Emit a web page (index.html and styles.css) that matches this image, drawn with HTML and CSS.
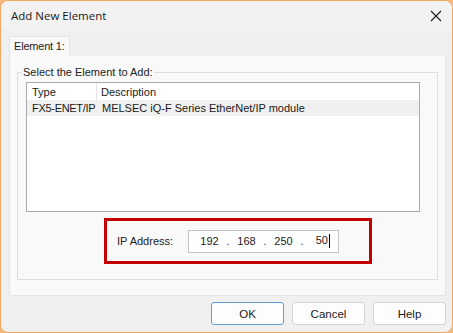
FILE: index.html
```html
<!DOCTYPE html>
<html lang="en">

<head>
    <meta charset="UTF-8">
    <title>Add New Element</title>
    <link rel="stylesheet" href="styles.css">
</head>

<body>
    <div class="window">
        <div class="titlebar">
            <span class="title">Add New Element</span>
            <svg class="close" width="12" height="12" viewBox="0 0 12 12">
                <path d="M1 1 L11 11 M11 1 L1 11" stroke="#1a1a1a" stroke-width="1.1" fill="none" />
            </svg>
        </div>
        <div class="body">
            <div class="tabs">
                <div class="tab">Element 1:</div>
            </div>
            <div class="panel">
                <fieldset class="group">
                    <legend>Select the Element to Add:</legend>
                    <div class="list">
                        <div class="row head">
                            <div class="col-type">Type</div>
                            <div class="col-desc">Description</div>
                        </div>
                        <div class="row item">
                            <div class="col-type">FX5-ENET/IP</div>
                            <div class="col-desc">MELSEC iQ-F Series EtherNet/IP module</div>
                        </div>
                    </div>
                    <div class="ip-area">
                        <span class="ip-label">IP Address:</span>
                        <div class="ip-box">
                            <span class="oct">192</span><span class="dot">.</span>
                            <span class="oct">168</span><span class="dot">.</span>
                            <span class="oct">250</span><span class="dot">.</span>
                            <span class="oct last">50<span class="caret"></span></span>
                        </div>
                    </div>
                </fieldset>
            </div>
            <div class="buttons">
                <button class="btn default">OK</button>
                <button class="btn">Cancel</button>
                <button class="btn">Help</button>
            </div>
        </div>
    </div>
</body>

</html>
```

FILE: styles.css
```css
* {
    margin: 0;
    padding: 0;
    box-sizing: border-box;
}

body {
    width: 453px;
    height: 333px;
    background: #f7b879;
    font-family: "Liberation Sans", Arial, sans-serif;
    font-size: 11px;
    color: #1a1a1a;
}

/* dialog window */
.window {
    width: 453px;
    height: 333px;
    border: 1px solid #f0a860;
    border-radius: 8px;
    background: #f0f0f0;
    overflow: hidden;
}

.titlebar {
    height: 29px;
    display: flex;
    align-items: center;
    justify-content: space-between;
    padding: 0 10px 0 10px;
    background: #f2f2f2;
}

.title {
    font-family: "Open Sans", "Liberation Sans", sans-serif;
    font-size: 11.5px;
    color: #1a1a1a;
}

.body {
    padding: 0 6px 0 8px;
}

/* tab strip */
.tabs {
    display: flex;
    padding-top: 6px;
}

.tab {
    width: 61px;
    height: 20px;
    padding: 3px 0 0 4px;
    background: #f9f9f9;
    border: 1px solid #e4e4e4;
    border-bottom: none;
    color: #222;
    letter-spacing: -0.2px;
}

.panel {
    height: 240px;
    background: #f9f9f9;
    border: 1px solid #e4e4e4;
    border-top: none;
    padding: 10px 7px 0 7px;
}

/* group box */
.group {
    height: 214px;
    border: 1px solid #dedede;
    padding: 4px 17px 0 8px;
}

.group legend {
    margin-left: -4px;
    padding: 0 1px;
    color: #222;
}

.list {
    height: 130px;
    background: #fff;
    border: 1px solid #a9a9b0;
}

.row {
    display: flex;
    height: 17px;
    align-items: center;
    white-space: nowrap;
}

.row.item {
    background: #f0f0f0;
    height: 16px;
}

.col-type {
    width: 70px;
    flex-shrink: 0;
    padding-left: 5px;
}

.item .col-type {
    letter-spacing: -0.3px;
}

.col-desc {
    padding-left: 5px;
}

.head .col-type {
    border-right: 1px solid #e5e5e5;
    height: 100%;
    display: flex;
    align-items: center;
}

.head .col-desc {
    padding-left: 4px;
}

/* highlighted ip area */
.ip-area {
    width: 268px;
    height: 46px;
    margin: 6px 0 0 78px;
    border: 3px solid #c40000;
    display: flex;
    align-items: center;
    padding-left: 10px;
}

.ip-label {
    width: 71px;
    color: #222;
}

.ip-box {
    width: 151px;
    height: 23px;
    background: #fff;
    border: 1px solid #c4c4c4;
    display: flex;
    align-items: center;
    padding-left: 11px;
}

.oct {
    width: 19px;
    text-align: center;
}

.dot {
    width: 18px;
    text-align: center;
}

.oct.last {
    text-align: right;
}

.caret {
    display: inline-block;
    width: 1px;
    height: 14px;
    background: #000;
    vertical-align: middle;
    margin-left: 1px;
}

/* dialog buttons */
.buttons {
    display: flex;
    justify-content: flex-end;
    gap: 8px;
    padding-top: 6px;
}

.btn {
    width: 73px;
    height: 23px;
    background: #fdfdfd;
    border: 1px solid #d4d4d4;
    border-radius: 3px;
    font-family: "Liberation Sans", Arial, sans-serif;
    font-size: 11.5px;
    color: #1a1a1a;
}

.btn.default {
    border-color: #5e9fd6;
}
```
